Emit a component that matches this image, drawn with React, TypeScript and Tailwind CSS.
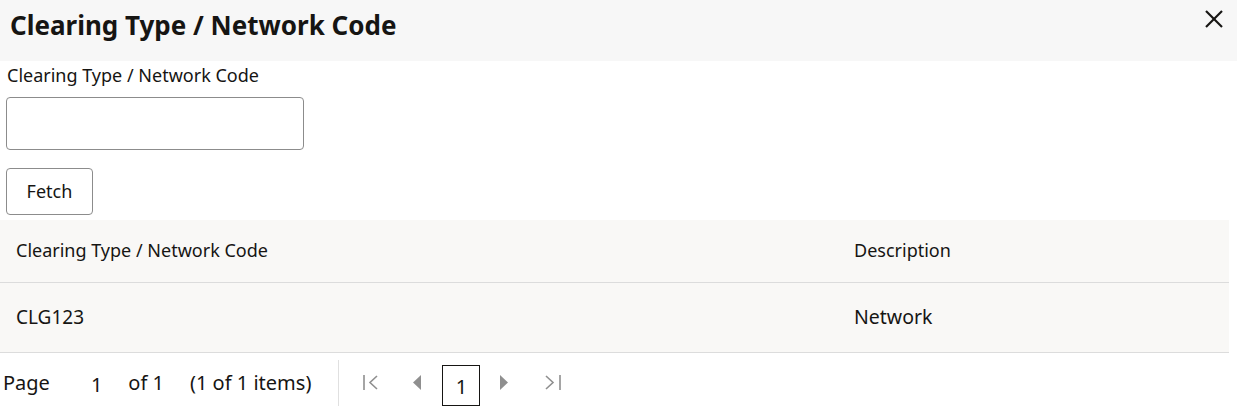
const font = { fontFamily: '"Noto Sans", "Open Sans", sans-serif' };

function CloseIcon() {
  return (
    <svg width="18" height="18" viewBox="0 0 18 18" fill="none" stroke="#161513" strokeWidth="2.2">
      <path d="M1 1L17 17" />
      <path d="M17 1L1 17" />
    </svg>
  );
}

function FirstIcon() {
  return (
    <svg width="17" height="17" viewBox="0 0 17 17" fill="none" stroke="#8f8f8f" strokeWidth="1.6">
      <path d="M2 1v15" />
      <path d="M15 2L8 8.5L15 15" />
    </svg>
  );
}

function LastIcon() {
  return (
    <svg width="18" height="17" viewBox="0 0 18 17" fill="none" stroke="#8f8f8f" strokeWidth="1.6">
      <path d="M16 1v15" />
      <path d="M2 2L9 8.5L2 15" />
    </svg>
  );
}

function PrevIcon() {
  return (
    <svg width="10" height="15" viewBox="0 0 10 15" fill="#8f8f8f">
      <path d="M9 0v15L1 7.5z" />
    </svg>
  );
}

function NextIcon() {
  return (
    <svg width="10" height="15" viewBox="0 0 10 15" fill="#8f8f8f">
      <path d="M1 0v15l8-7.5z" />
    </svg>
  );
}

export default function App() {
  return (
    <div className="w-[1237px] h-[409px] overflow-hidden bg-white text-[#161513]" style={font}>
      {/* Header */}
      <div className="flex h-[61px] items-start justify-between bg-[#f7f7f7] pl-[10px] pr-[14px]">
        <h1 className="pt-[12px] text-[26px] font-bold leading-none">
          Clearing Type / Network Code
        </h1>
        <button className="mt-[10px]">
          <CloseIcon />
        </button>
      </div>

      {/* Search form */}
      <div className="px-[6px] pt-[2px]">
        <label className="block pl-[1px] text-[18px] leading-[24px]">
          Clearing Type / Network Code
        </label>
        <input className="mt-[10px] block h-[53px] w-[298px] rounded-[4px] border border-[#8c8c8c] px-3 text-[18px] outline-none" />
        <button className="mt-[18px] block h-[47px] w-[87px] rounded-[4px] border border-[#8c8c8c] bg-white text-[18px]">
          Fetch
        </button>
      </div>

      {/* Results */}
      <div className="mt-[5px] w-[1229px]">
        <table className="w-full border-collapse bg-[#f9f8f6]">
          <thead>
            <tr className="h-[62px] border-b border-[#dcdcdc]">
              <th className="w-[838px] px-[16px] text-left text-[18px] font-normal">
                Clearing Type / Network Code
              </th>
              <th className="px-[16px] text-left text-[18px] font-normal">
                Description
              </th>
            </tr>
          </thead>
          <tbody>
            <tr className="h-[70px] border-b border-[#dcdcdc]">
              <td className="px-[16px] text-[19px]">CLG123</td>
              <td className="px-[16px] text-[19.5px]">Network</td>
            </tr>
          </tbody>
        </table>
      </div>

      {/* Pagination */}
      <div className="flex h-[56px] items-center pt-[4px] text-[20px] leading-[30px]">
        <span className="pl-[3px]">Page</span>
        <span className="ml-[41px] mt-[4px]">1</span>
        <span className="ml-[26px]">of 1</span>
        <span className="ml-[26px]">(1 of 1 items)</span>
        <div className="ml-[27px] h-[46px] w-px bg-[#e0e0e0]" />
        <div className="ml-[23px] flex items-center">
          <FirstIcon />
        </div>
        <div className="ml-[33px] flex items-center">
          <PrevIcon />
        </div>
        <div className="ml-[20px] mt-[5px] flex h-[41px] w-[38px] items-center justify-center border border-[#161513] pt-[3px]">
          1
        </div>
        <div className="ml-[19px] flex items-center">
          <NextIcon />
        </div>
        <div className="ml-[35px] flex items-center">
          <LastIcon />
        </div>
      </div>
    </div>
  );
}
